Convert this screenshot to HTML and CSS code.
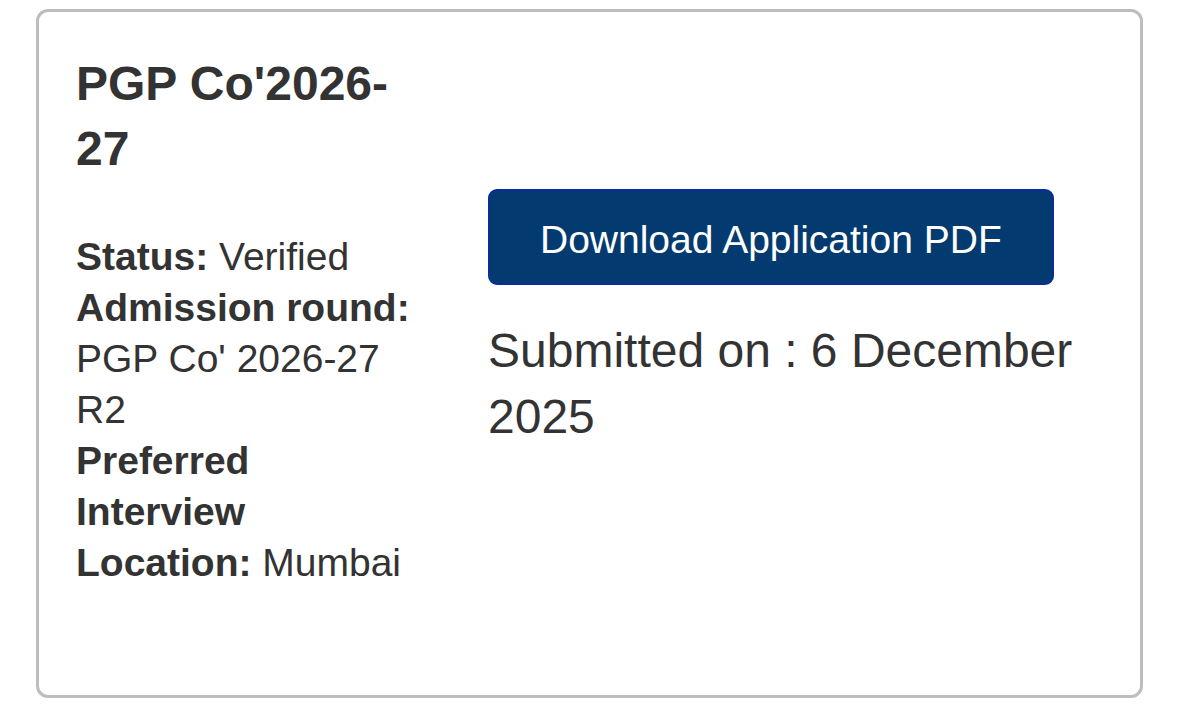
FILE: index.html
```html
<!DOCTYPE html>
<html lang="en">
<head>
<meta charset="utf-8">
<title>Application</title>
<link rel="stylesheet" href="styles.css">
</head>
<body>
<div class="card">
  <div class="info">
    <h2 class="title">PGP Co'2026-27</h2>
    <div class="details">
      <div><b>Status:</b> Verified</div>
      <div><b>Admission round:</b> PGP Co' 2026-27 R2</div>
      <div><b>Preferred Interview Location:</b> Mumbai</div>
    </div>
  </div>
  <div class="actions">
    <button class="download" type="button">Download Application PDF</button>
    <div class="submitted">Submitted on : 6 December 2025</div>
  </div>
</div>
</body>
</html>
```
FILE: styles.css
```css
html, body {
  margin: 0;
  padding: 0;
  background: #ffffff;
}
body {
  font-family: "Liberation Sans", Arial, Helvetica, sans-serif;
  color: #333333;
}
.card {
  box-sizing: border-box;
  margin: 9px 36px 0 36px;
  border: 3px solid #bdbdbd;
  border-radius: 12px;
  padding: 39px 37px 107px 37px;
  display: flex;
  align-items: center;
  gap: 74px;
}
.info {
  width: 338px;
  flex: none;
}
.title {
  margin: 0 0 50px 0;
  font-size: 48px;
  line-height: 65px;
  font-weight: bold;
  color: #333333;
}
.details {
  font-size: 39px;
  line-height: 51px;
}
.details b {
  font-weight: bold;
}
.actions {
  flex: 1;
  min-width: 0;
}
.download {
  display: inline-block;
  box-sizing: border-box;
  height: 96px;
  padding: 6px 50px 0 50px;
  background: #033b70;
  border: 2px solid #0b2c9e;
  border-radius: 9px;
  color: #ffffff;
  font-family: "Liberation Sans", Arial, Helvetica, sans-serif;
  font-size: 39px;
  cursor: pointer;
}
.submitted {
  margin-top: 33px;
  font-size: 48px;
  line-height: 66px;
  color: #333333;
}
```
